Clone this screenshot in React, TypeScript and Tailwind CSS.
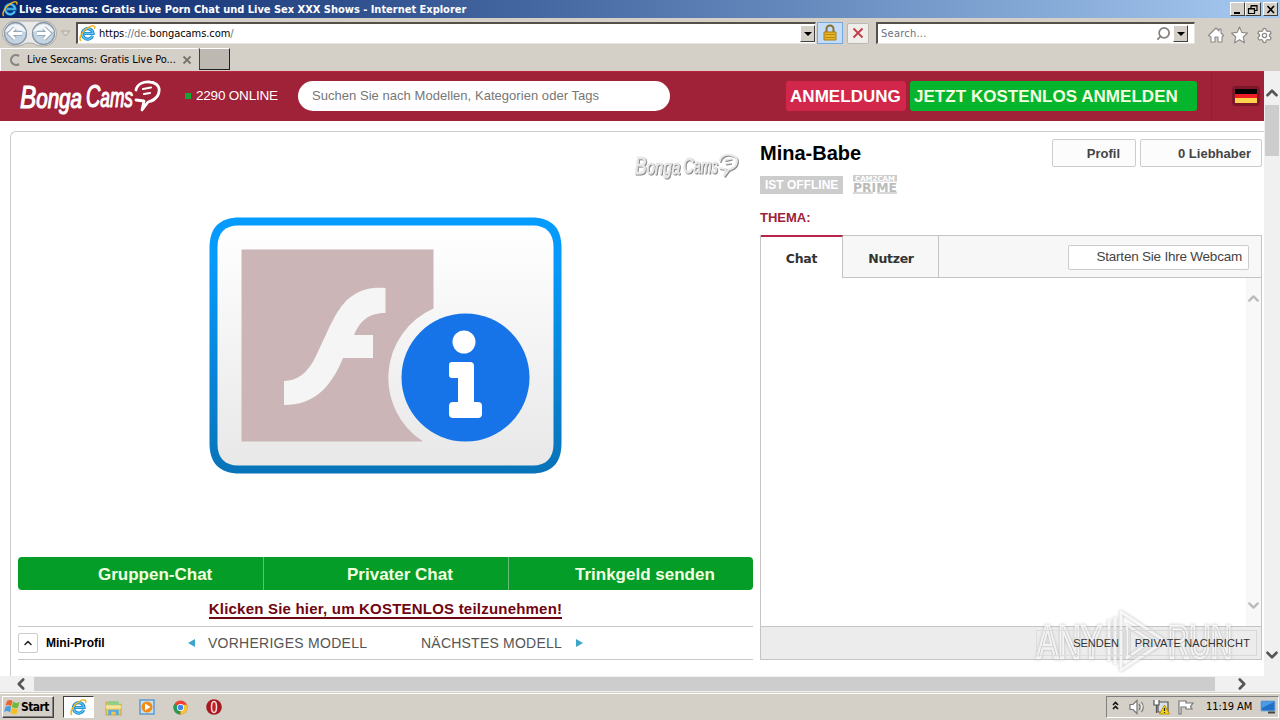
import { ChevronDown, ChevronLeft, ChevronRight, ChevronUp, Search, Settings } from "lucide-react";

function ExplorerIcon({ className }: { className: string }) {
  return (
    <svg viewBox="0 0 18 18" className={className}>
      <path d="M14.4 11.5A5.6 5.6 0 1 1 14.8 9H5.5" fill="none" stroke="#1687d0" strokeWidth="3.4" />
      <path d="M14.4 11.5A5.6 5.6 0 1 1 14.8 9H5.5" fill="none" stroke="#65c8f3" strokeWidth="1.4" />
      <path d="M2 17C-1 14 4 6 10 2.6C14 .3 18 0 16.4 4" fill="none" stroke="#edb51c" strokeWidth="1.6" />
    </svg>
  );
}

function Bubble() {
  return (
    <g fill="none" strokeLinecap="round" strokeLinejoin="round">
      <path d="M118 12C119 6 126 3 132 4C140 5 143 10 140 17C138 21 134 23 130 24L124 32L126 23L118 22" strokeWidth="2.800" />
      <path d="M125 11L133 9.500M126 16L132 15" strokeWidth="2.200" />
    </g>
  );
}

function Logo({ className }: { className: string }) {
  return (
    <svg viewBox="0 0 144 38" className={className} fontFamily="Liberation Sans, sans-serif" fontStyle="italic" fill="currentColor" stroke="currentColor" strokeWidth="1.200" strokeLinejoin="round">
      <text x="2" y="29.500" textLength="62" lengthAdjust="spacingAndGlyphs" fontSize="32">
        B<tspan fontSize="27">onga</tspan>
      </text>
      <text x="68" y="28.500" textLength="47" lengthAdjust="spacingAndGlyphs" fontSize="31">
        C<tspan fontSize="27">ams</tspan>
      </text>
      <Bubble />
    </svg>
  );
}

function TitleBar() {
  return (
    <div className="flex h-[18px] shrink-0 items-center bg-linear-to-r from-[#0a246a] to-[#a6caf0] pr-0.5 pl-0.5">
      <ExplorerIcon className="size-4 shrink-0" />
      <span className="ml-px flex-1 pt-px font-['DejaVu_Sans_Condensed','DejaVu_Sans',sans-serif] text-[11px] leading-[17px] font-bold tracking-[-0.015px] text-white">
        Live Sexcams: Gratis Live Porn Chat und Live Sex XXX Shows - Internet Explorer
      </span>
      <WindowButton>
        <path d="M3 9h6v2H3z" fill="#000" />
      </WindowButton>
      <WindowButton>
        <path d="M5 2.5h6v5H9M5 2.5V5M5 3h6M2.500 5.500h6v5h-6zM2.500 6h6" fill="none" stroke="#000" strokeWidth="1.200" />
      </WindowButton>
      <div className="w-0.5" />
      <WindowButton>
        <path d="M3.500 3L10 10M10 3L3.500 10" stroke="#000" strokeWidth="1.700" />
      </WindowButton>
    </div>
  );
}

function WindowButton({ children }: { children: React.ReactNode }) {
  return (
    <div className="h-3.5 w-[15.500px] border-t border-r border-b border-l border-t-white border-r-[#404040] border-b-[#404040] border-l-white bg-[#d4d0c8]">
      <svg viewBox="0 0 13 12" className="block h-3 w-[13px]">
        {children}
      </svg>
    </div>
  );
}

function DropButton() {
  return (
    <div className="flex h-[17px] w-[15px] items-center justify-center border border-t-white border-r-[#404040] border-b-[#404040] border-l-white bg-[#d4d0c8]">
      <div className="border-x-4 border-t-4 border-x-transparent border-t-black" />
    </div>
  );
}

function AddressBar() {
  return (
    <div className="flex h-[30px] shrink-0 items-center bg-[#d4d0c8] font-['DejaVu_Sans_Condensed','DejaVu_Sans',sans-serif] text-[11px]">
      <svg viewBox="0 0 76 30" className="h-[30px] w-[76px] shrink-0">
        <path d="M15 3H44A12 12 0 0 1 44 28C34 28 36 25 29 25S25 28 15 28A12 12 0 0 1 15 3Z" fill="#e9e9e9" stroke="#aaa7a2" />
        <circle cx="15.500" cy="15.500" r="11" fill="#c5d4e3" stroke="#8b98a6" strokeWidth="1.300" />
        <circle cx="43.500" cy="15.500" r="11" fill="#c5d4e3" stroke="#8b98a6" strokeWidth="1.300" />
        <path d="M5 14A11 11 0 0 1 26 14Q15 10 5 14M33 14A11 11 0 0 1 54 14Q43 10 33 14" fill="#f2f6f9" />
        <path d="M22 15.500H10M15 10L9.500 15.500L15 21M37 15.500H49M44 10L49.500 15.500L44 21" stroke="#8c9dac" strokeWidth="4.500" fill="none" />
        <path d="M22 15.500H10M15 10L9.500 15.500L15 21M37 15.500H49M44 10L49.500 15.500L44 21" stroke="#fff" strokeWidth="2.800" fill="none" />
        <path d="M61.500 13h8l-4 5z" fill="#dedbd5" stroke="#aaa69f" />
      </svg>
      <div className="flex h-[22px] w-[740px] shrink-0 items-center border-t-2 border-r border-b border-l-2 border-t-[#555149] border-r-[#e7e4df] border-b-[#e7e4df] border-l-[#555149] bg-white pl-px">
        <ExplorerIcon className="size-[17px] shrink-0" />
        <span className="ml-[3px] flex-1 pt-px text-[11px] tracking-[-0.05px] text-black">
          https<span className="text-gray-500">://de.</span>bongacams.com<span className="text-gray-500">/</span>
        </span>
        <DropButton />
      </div>
      <div className="ml-px flex h-[22px] w-[26px] shrink-0 items-center justify-center border border-[#78a8e0] bg-[#c3dcfa]">
        <svg viewBox="0 0 16 18" className="h-[18px] w-4">
          <path d="M4.500 9V5a3.500 3.500 0 0 1 7 0v4" fill="none" stroke="#8b7128" strokeWidth="2" />
          <path d="M2 8h12v8H2z" fill="#e8b324" stroke="#a77e16" />
          <path d="M3 10.500h10M3 13.500h10" stroke="#b88913" />
        </svg>
      </div>
      <div className="ml-1 flex h-[21px] w-[22px] shrink-0 items-center justify-center rounded-xs border border-[#bcb8b2] bg-[#f0eeeb]">
        <svg viewBox="0 0 12 12" className="size-3">
          <path d="M1.500 1.500L10.500 10.500M10.500 1.500L1.500 10.500" stroke="#c43e49" strokeWidth="1.900" />
        </svg>
      </div>
      <div className="ml-[7px] flex h-[22px] w-[319px] shrink-0 items-center border-t-2 border-r border-b border-l-2 border-t-[#555149] border-r-[#e7e4df] border-b-[#e7e4df] border-l-[#555149] bg-white pr-1.5 pl-[3px]">
        <span className="flex-1 pt-px tracking-[0.25px] text-gray-500">Search...</span>
        <Search className="mr-0.5 size-[15px] -scale-x-100 text-[#87817d]" strokeWidth={2.8} />
        <DropButton />
      </div>
      <svg viewBox="0 0 75 24" className="mt-1 ml-3 h-6 w-[75px] shrink-0" fill="#fff" stroke="#8b8985" strokeWidth="1.100" strokeLinejoin="round">
        <path d="M1.500 12.500L9 5L12 8V6H14V10L16.500 12.500L15 14V19H11V14H8V19H4V14Z" />
        <path d="M32.500 4L34.800 9.400L40.500 10L36.200 14L37.500 19.800L32.500 16.800L27.500 19.800L28.800 14L24.500 10L30.200 9.400Z" />
      </svg>
      <div className="mt-1 -ml-7 flex size-5 shrink-0 items-center justify-center">
        <Settings className="size-[17px] fill-white text-[#8b8985]" strokeWidth={1.8} />
      </div>
    </div>
  );
}

function TabBar() {
  return (
    <div className="flex h-[23px] shrink-0 bg-[#d4d0c8] font-['DejaVu_Sans_Condensed','DejaVu_Sans',sans-serif] text-[11px] text-black">
      <div className="flex w-[198px] items-center border-t border-l border-t-white border-l-white pl-[7px]">
        <svg viewBox="0 0 14 14" className="size-3.5">
          <path d="M11 3A5 5 0 1 0 11 11" fill="none" stroke="#8a8681" strokeWidth="2.200" />
        </svg>
        <span className="ml-[5px] w-[155px] pt-px tracking-[-0.07px] whitespace-nowrap">Live Sexcams: Gratis Live Po...</span>
        <svg viewBox="0 0 10 10" className="size-2.5">
          <path d="M1.500 1.500l7 7m0-7l-7 7" stroke="#77736e" strokeWidth="1.800" />
        </svg>
      </div>
      <div className="ml-px h-[22px] w-[31px] border border-t-white border-r-[#202020] border-b-[#202020] border-l-[#404040] bg-[#bdb8b1]" />
    </div>
  );
}

function SiteHeader() {
  return (
    <header className="flex h-[50px] shrink-0 items-center bg-[#a02238] shadow-[inset_0_1px_#b8233e]">
      <Logo className="mt-0.5 ml-[18px] h-[38px] w-36 text-white" />
      <div className="ml-[23px] size-[6px] bg-[#17a331]" />
      <span className="ml-[5px] w-[102px] pb-px text-[13.500px] leading-5 tracking-[-0.2px] text-white">2290 ONLINE</span>
      <div className="flex h-[30px] w-[372px] items-center rounded-full bg-white pl-3.5 text-[13px] tracking-[0.04px] text-[#777]">
        Suchen Sie nach Modellen, Kategorien oder Tags
      </div>
      <div className="ml-[116px] flex h-[30px] w-[120px] items-center rounded-[3px] bg-[#d2264a] pt-0.5 pl-1 text-[17px] font-bold tracking-[0.04px] text-white">
        ANMELDUNG
      </div>
      <div className="ml-1 flex h-[30px] w-[287px] items-center rounded-[3px] bg-[#05b52e] pt-0.5 pl-1 text-[17px] font-bold tracking-[0.04px] text-[#f3ffdf]">
        JETZT KOSTENLOS ANMELDEN
      </div>
      <div className="ml-[14px] h-[49px] w-px bg-[#981d32]" />
      <div className="ml-5 flex h-5 w-7 flex-col rounded-sm border-[3px] border-[#7d182b]">
        <div className="h-[5px] bg-black" />
        <div className="h-[5px] bg-[#ef1c24]" />
        <div className="h-[5px] bg-[#ffd34b]" />
      </div>
    </header>
  );
}

function FlashNotice() {
  return (
    <svg viewBox="209 217 353 257" className="mt-5 h-[257px] w-[353px]">
      <defs>
        <linearGradient id="frame" x2="0" y2="1">
          <stop stopColor="#059bff" />
          <stop offset=".2" stopColor="#0798fa" />
          <stop offset="1" stopColor="#0873b8" />
        </linearGradient>
        <linearGradient id="panel" x2="0" y2="1">
          <stop stopColor="#fff" />
          <stop offset="1" stopColor="#e8e8e8" />
        </linearGradient>
      </defs>
      <path d="M240 217.500H531C552 217.500 561.500 228 561.500 248V443C561.500 463 552 473.500 531 473.500H240C219 473.500 209.500 463 209.500 443V248C209.500 228 219 217.500 240 217.500Z" fill="url(#frame)" />
      <path d="M238 225.500H533C546 225.500 553.500 233 553.500 247V444C553.500 458 546 465.500 533 465.500H238C225 465.500 217.500 458 217.500 444V247C217.500 233 225 225.500 238 225.500Z" fill="url(#panel)" />
      <path d="M241.500 249.500H433.500V308.500A75.800 75.800 0 0 0 423 441.500H241.500Z" fill="#cbb5b6" />
      <path d="M385.500 288V313C370 313 361 319 354 335H373V358H343C330 390 312 405 284 405V381C297 381 308 373 316 356C329 329 337 306 352 296C362 289 372 287 385.500 288Z" fill="#f5f5f5" />
      <circle cx="465.500" cy="377.500" r="64" fill="#1674e8" />
      <circle cx="464" cy="342" r="11.500" fill="#fff" />
      <path d="M452 362H470Q474 362 474 366V402H478Q482 402 482 406V414Q482 418 478 418H453Q449 418 449 414V406Q449 402 453 402H458V378H452Q449 378 449 375V365Q449 362 452 362Z" fill="#fff" />
    </svg>
  );
}

function VideoColumn() {
  return (
    <section className="flex w-[735px] flex-col">
      <div className="relative flex h-[425px] flex-col items-center pt-[65px]">
        <Logo className="absolute top-[20px] left-[614px] h-7 w-[108px] text-[#e8e8e8] drop-shadow-[1px_1px_0.5px_#888]" />
        <FlashNotice />
      </div>
      <div className="flex h-[33px] overflow-hidden rounded bg-[#039d27] text-[17px] font-bold text-[#f3ffe0]">
        <div className="flex w-[246px] items-center border-r border-[#66bb78] pt-0.5 pl-[80px]">Gruppen-Chat</div>
        <div className="flex w-[245px] items-center border-r border-[#66bb78] pt-0.5 pl-[83px]">Privater Chat</div>
        <div className="flex items-center pt-0.5 pl-[66px]">Trinkgeld senden</div>
      </div>
      <div className="flex h-[37px] items-center justify-center border-b border-[#c8c8c8] pt-0.5">
        <a className="border-b-2 border-[#700611] text-[15px] leading-[17px] font-bold tracking-[0.21px] text-[#700611]">Klicken Sie hier, um KOSTENLOS teilzunehmen!</a>
      </div>
      <div className="flex h-[33px] items-center border-b border-[#c8c8c8] text-[14px] text-[#555]">
        <div className="flex size-5 items-center justify-center rounded-xs border border-[#ccc]">
          <ChevronUp className="size-3 text-[#222]" strokeWidth={3} />
        </div>
        <span className="ml-2 w-[142px] text-[12px] font-bold text-black">Mini-Profil</span>
        <div className="border-y-4 border-r-[7px] border-y-transparent border-r-[#3ba5ca]" />
        <span className="ml-[13px] w-[213px] tracking-[0.26px]">VORHERIGES MODELL</span>
        <span className="w-[155px] tracking-[0.22px]">NÄCHSTES MODELL</span>
        <div className="border-y-4 border-l-[7px] border-y-transparent border-l-[#3ba5ca]" />
      </div>
    </section>
  );
}

function ChatColumn() {
  return (
    <section className="ml-[7px] flex w-[502px] flex-col">
      <div className="mt-[7px] flex h-7 gap-1 text-[13px] font-bold text-[#444]">
        <h1 className="w-72 text-[20px] leading-7 text-black">Mina-Babe</h1>
        <div className="flex w-[84px] items-center justify-end rounded-xs border border-[#ccc] bg-[#fcfcfc] pt-px pr-[15px]">Profil</div>
        <div className="flex w-[122px] items-center justify-end rounded-xs border border-[#ccc] bg-[#fcfcfc] pt-px pr-2.5">0 Liebhaber</div>
      </div>
      <div className="mt-2 flex h-[19px] items-end">
        <div className="h-[18px] w-[83px] bg-[#ccc] pl-[5px] text-[12px] leading-[18px] font-bold text-white">IST OFFLINE</div>
        <svg viewBox="0 0 44 19" className="ml-2.5 h-[19px] w-11 overflow-visible" fontFamily="DejaVu Sans, sans-serif" fontWeight="700">
          <path d="M0 0H44V6.500H0z" fill="#ccc" />
          <text x="2" y="6" textLength="40" lengthAdjust="spacingAndGlyphs" fontSize="7" fill="#fff">
            CAM2CAM
          </text>
          <text x="0" y="16.500" textLength="44" lengthAdjust="spacingAndGlyphs" fontSize="12" fill="#bbb">
            PRIME
          </text>
          <path d="M0 18H20M24 18H44" stroke="#ccc" strokeWidth="1.500" />
        </svg>
      </div>
      <div className="mt-[13px] h-7 pt-px text-[13px] leading-5 font-bold text-[#a02238]">THEMA:</div>
      <div className="flex h-[43px] border border-[#c4c4c4] bg-[#f7f7f7] font-['DejaVu_Sans',sans-serif] text-[12.500px] font-bold text-[#333]">
        <div className="-mt-px -mb-px flex w-[82px] items-center justify-center border-t-2 border-r border-t-[#b8264b] border-r-[#c4c4c4] bg-white pt-[3px] tracking-[-0.2px]">Chat</div>
        <div className="flex w-24 items-center justify-center border-r border-[#c4c4c4] pt-[5px] pl-px tracking-[-0.3px]">Nutzer</div>
        <div className="mt-[9px] ml-[129px] flex h-[25px] w-[181px] items-center justify-end rounded-xs border border-[#ccc] bg-white pr-1.5 font-['Liberation_Sans',sans-serif] text-[13.500px] font-normal tracking-[-0.22px] text-[#444]">
          Starten Sie Ihre Webcam
        </div>
      </div>
      <div className="flex h-[348px] border-x border-[#c4c4c4]">
        <div className="flex-1" />
        <div className="flex w-[15px] flex-col items-center justify-between bg-[#f8f8f8] pt-3 pb-3 text-[#bbb]">
          <ChevronUp className="size-[17px]" strokeWidth={3.2} />
          <ChevronDown className="size-[17px]" strokeWidth={3.2} />
        </div>
      </div>
      <div className="relative flex h-[34px] items-center border border-[#c4c4c4] bg-[#ececec] pl-[275px] text-[11px] text-[#333]">
        <Watermark />
        <div className="relative flex h-[26px] w-[91px] items-center justify-end border border-[#ddd] pr-[7px]">SENDEN</div>
        <div className="relative ml-[3px] flex h-[26px] w-[127px] items-center justify-end border border-[#d8d8d8] pr-1.5 tracking-[0.12px] whitespace-nowrap">PRIVATE NACHRICHT</div>
      </div>
    </section>
  );
}

function Watermark() {
  return (
    <svg viewBox="0 0 200 70" className="absolute -top-[21px] left-[274px] h-[70px] w-[200px] overflow-visible opacity-80 drop-shadow-[0_0_1.5px_#999]" fill="#ddd" fillOpacity=".3" stroke="#fff" strokeOpacity=".85" strokeWidth="2.500">
      <text x="2" y="52" textLength="65" lengthAdjust="spacingAndGlyphs" fontFamily="Liberation Sans, sans-serif" fontSize="46">
        ANY
      </text>
      <text x="133" y="52" textLength="64" lengthAdjust="spacingAndGlyphs" fontFamily="Liberation Sans, sans-serif" fontSize="46">
        RUN
      </text>
      <path d="M86 6L130 35L86 64ZM80 11V58M74 14V55" fill="none" strokeWidth="3" strokeLinejoin="round" />
      <path d="M92 19L116 35L92 52Z" strokeWidth="2.500" strokeLinejoin="round" fill="none" />
    </svg>
  );
}

function Taskbar() {
  return (
    <footer className="flex h-7 shrink-0 items-center border-t border-[#d4d0c8] bg-[#d4d0c8] pt-px font-['DejaVu_Sans_Condensed','DejaVu_Sans',sans-serif] shadow-[inset_0_1px_white]">
      <div className="ml-0.5 flex h-[22px] w-[52px] items-center border border-t-white border-r-[#404040] border-b-[#404040] border-l-white pl-px text-[12px] font-bold tracking-[-0.55px] text-black shadow-[inset_-1px_-1px_#808080]">
        <svg viewBox="0 0 16 16" className="mr-px size-4 shrink-0">
          <path d="M3 2Q6 0 8.500 2L7 7.500Q4 5 1.500 7z" fill="#ed632c" />
          <path d="M9 2.500Q12 5 15.500 3L14 8.500Q11 10 8 8z" fill="#70b936" />
          <path d="M1.500 8Q5 6 7 8L6 13.500Q3 11 0 13z" fill="#449ddd" />
          <path d="M8 8.500Q11 11 14 9L12.500 15Q9 16 6.500 14z" fill="#f4be28" />
        </svg>
        Start
      </div>
      <div className="ml-[9px] flex h-[22px] w-[31px] items-center justify-center border border-t-[#404040] border-r-white border-b-white border-l-[#404040] bg-white">
        <ExplorerIcon className="size-[17px]" />
      </div>
      <svg viewBox="0 0 16 16" className="ml-[11px] size-[17px]">
        <path d="M1 3h5l1 2h8v10H1z" fill="#eacb60" stroke="#c9a949" />
        <path d="M3 2h10v4H3z" fill="#8fcf88" />
        <path d="M1 6h14v3H1z" fill="#f7e49b" />
        <path d="M3 10h10v5h-3v-3H6v3H3z" fill="#58aadd" />
      </svg>
      <svg viewBox="0 0 16 16" className="ml-[17px] size-4">
        <path d="M1 1h14v14H1z" fill="#c8e2f5" stroke="#5d9bcb" strokeWidth="1.500" />
        <circle cx="8" cy="8" r="5.500" fill="#f18b17" />
        <path d="M6 4.500L11.500 8L6 11.500z" fill="#fff" />
      </svg>
      <svg viewBox="0 0 16 16" className="ml-[18px] size-[15px]">
        <circle cx="8" cy="8" r="7.500" fill="#ed4135" />
        <path d="M8 8L1.500 4.200A7.500 7.500 0 0 0 8 15.500z" fill="#269b55" />
        <path d="M8 8L8 15.500A7.500 7.500 0 0 0 14.800 5H8z" fill="#f5c532" />
        <circle cx="8" cy="8" r="3.800" fill="#fff" />
        <circle cx="8" cy="8" r="2.900" fill="#4286ed" />
      </svg>
      <svg viewBox="0 0 16 16" className="ml-[18px] size-4">
        <circle cx="8" cy="8" r="7.800" fill="#a61921" />
        <ellipse cx="8" cy="8" rx="2.500" ry="5.500" fill="#c71f27" stroke="#f3dedb" strokeWidth="1.500" />
      </svg>
      <div className="mr-px ml-auto flex h-[22px] w-[173px] items-center border border-t-[#808080] border-r-white border-b-white border-l-[#808080] text-black">
        <svg viewBox="0 0 94 20" className="h-5 w-[94px] shrink-0" fill="none" strokeWidth="1.200">
          <path d="M6 8l2.500-2.500L11 8M6 12l2.500-2.500L11 12" stroke="#111" strokeWidth="1.600" />
          <path d="M23 7.500h3l4-4v13l-4-4h-3zM32 7q2 3 0 6M34.500 5q3.500 5 0 10" stroke="#777" fill="#fff" />
          <path d="M51 5h10v10H51z" fill="#d8e0ea" stroke="#555" />
          <path d="M47 3v5h5V3M49.500 8v8" stroke="#555" fill="#fff" />
          <path d="M57.500 8l5 9h-10z" fill="#f6d51c" stroke="#bc9500" strokeWidth="1" />
          <path d="M57.500 11v3M57.500 15v1" stroke="#222" />
          <path d="M72 17V4h7v2h7l-2.500 3.500L85 12h-6v-2h-5v7z" fill="#fff" stroke="#777" />
        </svg>
        <span className="ml-[5px] w-[50px] pt-px text-[11px] tracking-[-0.1px] whitespace-nowrap">11:19 AM</span>
        <svg viewBox="0 0 16 16" className="ml-1 size-4 shrink-0">
          <path d="M1 2h14v10H1z" fill="#216fc6" stroke="#81aed8" />
          <path d="M2 3h12L2 9z" fill="#4b9be6" />
          <path d="M8 13.500h7" stroke="#444" strokeWidth="2" />
        </svg>
      </div>
    </footer>
  );
}

export default function App() {
  return (
    <div className="flex h-[720px] w-[1280px] flex-col overflow-hidden bg-white font-['Liberation_Sans',Arial,sans-serif]">
      <TitleBar />
      <AddressBar />
      <TabBar />
      <div className="flex h-[605px] shrink-0">
        <div className="flex w-[1264px] flex-col overflow-hidden">
          <SiteHeader />
          <main className="mt-2.5 ml-2.5 flex h-[545px] rounded-tl-md border-t border-l border-[#ccc] pl-[7px]">
            <VideoColumn />
            <ChatColumn />
          </main>
        </div>
        <div className="flex w-4 flex-col items-center bg-[#f0f0f0] pt-[13px] text-[#555]">
          <ChevronUp className="size-[18px]" strokeWidth={3.5} />
          <div className="mt-[3px] h-[51px] w-3.5 bg-[#cdcdcd]" />
          <ChevronDown className="mt-auto mb-3 size-[18px]" strokeWidth={3.5} />
        </div>
      </div>
      <div className="flex h-4 shrink-0 items-center bg-[#f0f0f0] text-[#555]">
        <ChevronLeft className="ml-3 size-[18px]" strokeWidth={3.5} />
        <div className="ml-1 h-3.5 w-[1181px] bg-[#cdcdcd]" />
        <ChevronRight className="ml-[18px] size-[18px]" strokeWidth={3.5} />
      </div>
      <Taskbar />
    </div>
  );
}
